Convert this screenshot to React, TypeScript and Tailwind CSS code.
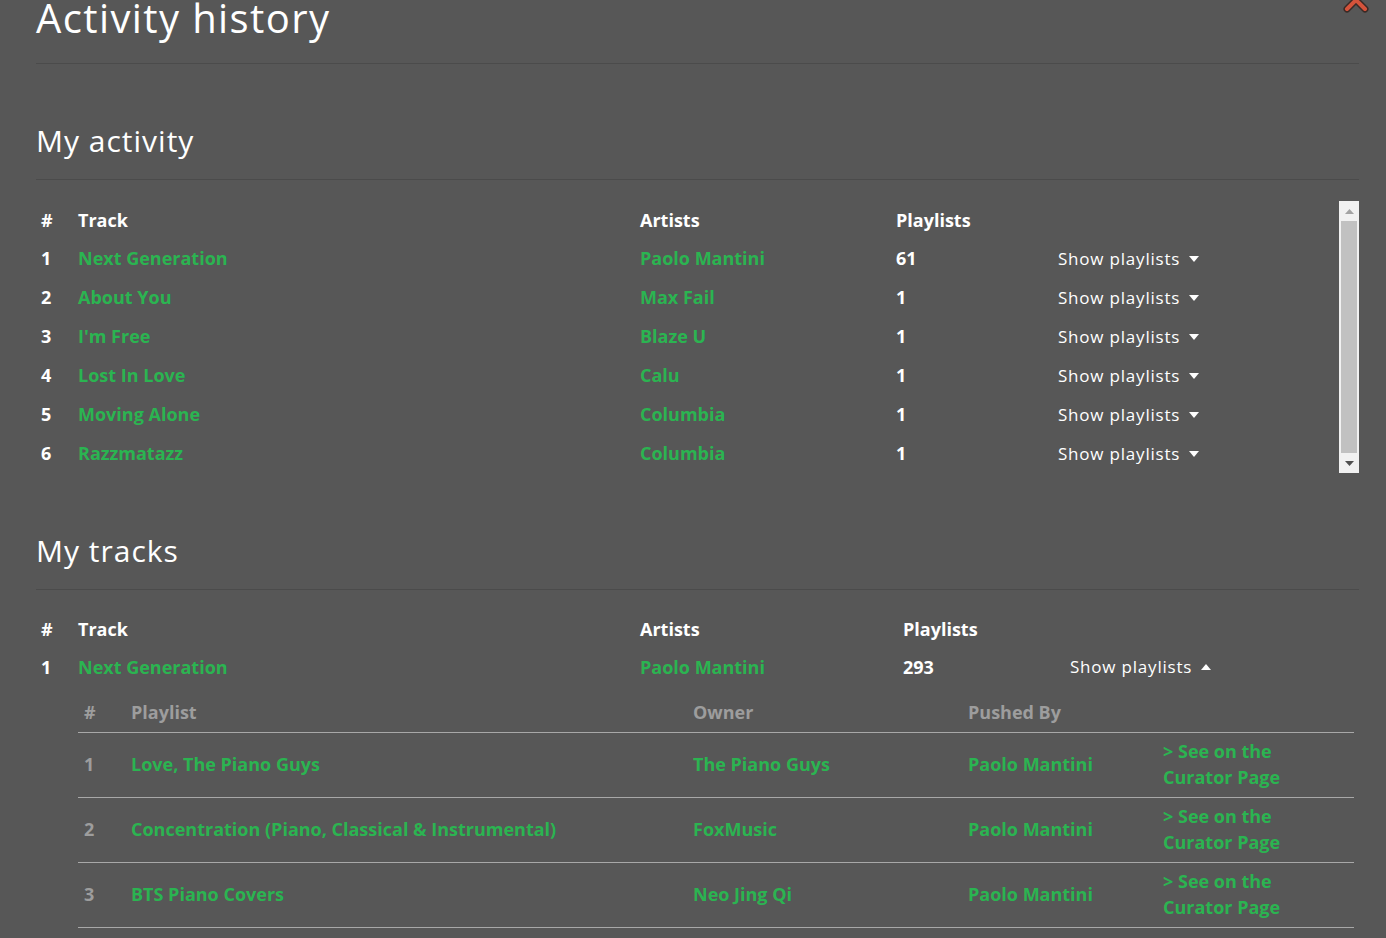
import React from "react";

const activity = [
  { n: 1, track: "Next Generation", artist: "Paolo Mantini", count: 61 },
  { n: 2, track: "About You", artist: "Max Fail", count: 1 },
  { n: 3, track: "I'm Free", artist: "Blaze U", count: 1 },
  { n: 4, track: "Lost In Love", artist: "Calu", count: 1 },
  { n: 5, track: "Moving Alone", artist: "Columbia", count: 1 },
  { n: 6, track: "Razzmatazz", artist: "Columbia", count: 1 },
];

const playlists = [
  { n: 1, name: "Love, The Piano Guys", owner: "The Piano Guys" },
  { n: 2, name: "Concentration (Piano, Classical & Instrumental)", owner: "FoxMusic" },
  { n: 3, name: "BTS Piano Covers", owner: "Neo Jing Qi" },
];

const Caret = ({ up }: { up?: boolean }) => (
  <svg width="10" height="6" viewBox="0 0 10 6" className="ml-[9px]">
    {up ? <path d="M0 6 L5 0 L10 6 Z" fill="#fff" /> : <path d="M0 0 L10 0 L5 6 Z" fill="#fff" />}
  </svg>
);

const ShowPlaylists = ({ up }: { up?: boolean }) => (
  <button className="flex items-center text-[17px] font-normal tracking-[0.8px] text-white">
    Show playlists
    <Caret up={up} />
  </button>
);

const FakeScrollbar = () => (
  <div className="w-[20px] flex flex-col bg-[#f1f1f1]">
    <div className="h-[20px] flex items-center justify-center">
      <svg width="9" height="5" viewBox="0 0 9 5">
        <path d="M0 5 L4.5 0 L9 5 Z" fill="#a3a3a3" />
      </svg>
    </div>
    <div className="flex-1 mx-[2px] bg-[#c1c1c1]" />
    <div className="h-[20px] flex items-center justify-center">
      <svg width="9" height="5" viewBox="0 0 9 5">
        <path d="M0 0 L9 0 L4.5 5 Z" fill="#505050" />
      </svg>
    </div>
  </div>
);

const App = () => {
  return (
    <div className="relative min-h-screen overflow-hidden bg-[#575757] text-white font-['Open_Sans',sans-serif]">
      <svg width="30" height="30" viewBox="0 0 30 30" className="absolute right-[15px] top-[-15px]">
        <path d="M6 6 L24 24 M24 6 L6 24" stroke="#3a2a26" strokeWidth="7" strokeLinecap="round" />
        <path d="M6 6 L24 24 M24 6 L6 24" stroke="#d4533b" strokeWidth="4" strokeLinecap="round" />
      </svg>

      <div className="pl-[36px] pr-[27px]">
        <h1 className="mt-[-7px] pb-[20px] text-[40px] leading-[50px] font-normal tracking-[1.4px] border-b border-[#4b4b4b]">
          Activity history
        </h1>

        <h2 className="mt-[59px] pb-[20px] text-[30px] leading-[36px] font-normal tracking-[1px] border-b border-[#4b4b4b]">
          My activity
        </h2>

        <div className="mt-[21px] flex h-[272px]">
          <div className="flex-1 text-[18px] font-bold">
            <div className="grid grid-cols-[42px_562px_256px_162px_1fr] h-[38px] items-center">
              <span className="pl-[5px]">#</span>
              <span>Track</span>
              <span>Artists</span>
              <span>Playlists</span>
              <span />
            </div>
            {activity.map((r) => (
              <div key={r.n} className="grid grid-cols-[42px_562px_256px_162px_1fr] h-[39px] items-center">
                <span className="pl-[5px]">{r.n}</span>
                <span className="text-[#2bb451]">{r.track}</span>
                <span className="text-[#2bb451]">{r.artist}</span>
                <span>{r.count}</span>
                <ShowPlaylists />
              </div>
            ))}
          </div>
          <FakeScrollbar />
        </div>

        <h2 className="mt-[60px] pb-[20px] text-[30px] leading-[36px] font-normal tracking-[1px] border-b border-[#4b4b4b]">
          My tracks
        </h2>

        <div className="mt-[20px] text-[18px] font-bold">
          <div className="grid grid-cols-[42px_562px_263px_167px_1fr] h-[38px] items-center">
            <span className="pl-[5px]">#</span>
            <span>Track</span>
            <span>Artists</span>
            <span>Playlists</span>
            <span />
          </div>
          <div className="grid grid-cols-[42px_562px_263px_167px_1fr] h-[38px] items-center">
            <span className="pl-[5px]">1</span>
            <span className="text-[#2bb451]">Next Generation</span>
            <span className="text-[#2bb451]">Paolo Mantini</span>
            <span>293</span>
            <ShowPlaylists up />
          </div>

          <div className="ml-[42px] mr-[5px]">
            <div className="grid grid-cols-[53px_562px_275px_195px_1fr] pt-[13px] pb-[7px] leading-[26px] text-[#9d9d9d] border-b border-[#a8a8a8]">
              <span className="pl-[6px]">#</span>
              <span>Playlist</span>
              <span>Owner</span>
              <span>Pushed By</span>
              <span />
            </div>
            {playlists.map((p) => (
              <div
                key={p.n}
                className="grid grid-cols-[53px_562px_275px_195px_1fr] h-[65px] items-center border-b border-[#a8a8a8]"
              >
                <span className="pl-[6px] -mt-[2px] text-[#9d9d9d]">{p.n}</span>
                <span className="-mt-[2px] text-[#2bb451]">{p.name}</span>
                <span className="-mt-[2px] text-[#2bb451]">{p.owner}</span>
                <span className="-mt-[2px] text-[#2bb451]">Paolo Mantini</span>
                <span className="w-[150px] -mt-[3px] leading-[26px] text-[#2bb451]">&gt; See on the Curator Page</span>
              </div>
            ))}
          </div>
        </div>
      </div>
    </div>
  );
};

export default App;
